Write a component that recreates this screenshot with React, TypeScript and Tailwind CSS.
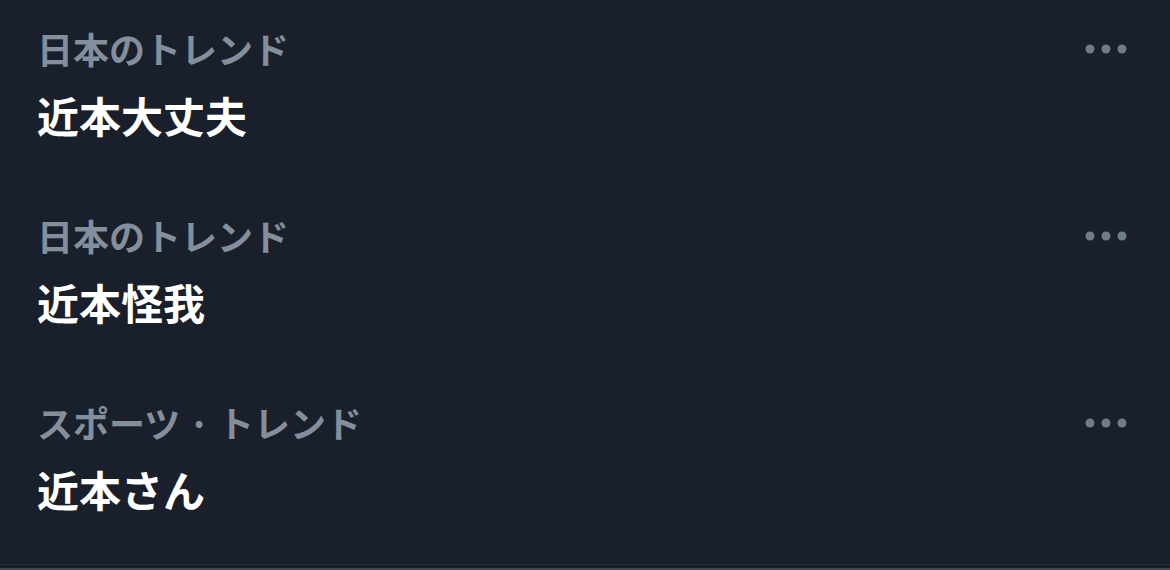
import React from "react";

const trends = [
  { label: "日本のトレンド", title: "近本大丈夫" },
  { label: "日本のトレンド", title: "近本怪我" },
  { label: "スポーツ · トレンド", title: "近本さん" },
];

function MoreDots() {
  return (
    <svg width="44" height="12" viewBox="0 0 44 12" className="text-[#6f7b88]">
      <circle cx="6" cy="6" r="4.5" fill="currentColor" />
      <circle cx="22" cy="6" r="4.5" fill="currentColor" />
      <circle cx="38" cy="6" r="4.5" fill="currentColor" />
    </svg>
  );
}

export default function App() {
  return (
    <div
      className="w-[1170px] h-[570px] bg-[#19202b] flex flex-col overflow-hidden"
      style={{ fontFamily: '"Noto Sans CJK JP", "Noto Sans", sans-serif' }}
    >
      <div className="flex-1">
        {trends.map((t, i) => (
          <div key={i} className="h-[187px] pl-[37px] pr-[42px] pt-[26px] flex">
            <div className="flex-1 flex flex-col gap-[20px]">
              <div className="text-[36px] leading-[44px] font-bold text-[#858f9b]">{t.label}</div>
              <div className="text-[42px] leading-[50px] font-bold text-white">{t.title}</div>
            </div>
            <div className="pt-[17px]">
              <MoreDots />
            </div>
          </div>
        ))}
      </div>
      <div className="h-px bg-[#232c37]" />
      <div className="h-[3px]" />
      <div className="h-[2px] bg-[#3e4853]" />
    </div>
  );
}
